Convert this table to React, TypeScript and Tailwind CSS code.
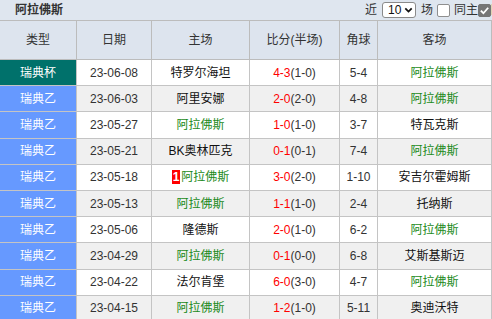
import React from "react";

type Row = {
  league: string;
  date: string;
  home: string;
  score: string;
  half: string;
  corner: string;
  away: string;
  cup?: boolean;
  tag?: string;
};

const TEAM = "阿拉佛斯";

const rows: Row[] = [
  { league: "瑞典杯", cup: true, date: "23-06-08", home: "特罗尔海坦", score: "4-3", half: "(1-0)", corner: "5-4", away: TEAM },
  { league: "瑞典乙", date: "23-06-03", home: "阿里安娜", score: "2-0", half: "(2-0)", corner: "4-8", away: TEAM },
  { league: "瑞典乙", date: "23-05-27", home: TEAM, score: "1-0", half: "(1-0)", corner: "3-7", away: "特瓦克斯" },
  { league: "瑞典乙", date: "23-05-21", home: "BK奥林匹克", score: "0-1", half: "(0-1)", corner: "7-4", away: TEAM },
  { league: "瑞典乙", date: "23-05-18", home: TEAM, tag: "1", score: "3-0", half: "(2-0)", corner: "1-10", away: "安吉尔霍姆斯" },
  { league: "瑞典乙", date: "23-05-13", home: TEAM, score: "1-1", half: "(1-0)", corner: "2-4", away: "托纳斯" },
  { league: "瑞典乙", date: "23-05-06", home: "隆德斯", score: "2-0", half: "(1-0)", corner: "6-2", away: TEAM },
  { league: "瑞典乙", date: "23-04-29", home: TEAM, score: "0-1", half: "(0-0)", corner: "6-8", away: "艾斯基斯迈" },
  { league: "瑞典乙", date: "23-04-22", home: "法尔肯堡", score: "6-0", half: "(3-0)", corner: "4-7", away: TEAM },
  { league: "瑞典乙", date: "23-04-15", home: TEAM, score: "1-2", half: "(1-0)", corner: "5-11", away: "奥迪沃特" },
];

const cols = ["w-[77px]", "w-[75px]", "w-[98px]", "w-[90px]", "w-[38px]", "flex-1"];

function TeamName({ name, tag }: { name: string; tag?: string }) {
  const isUs = name === TEAM;
  return (
    <span className={isUs ? "text-[#1a8a1a]" : "text-[#111]"}>
      {tag && (
        <span className="mr-px inline-block bg-[#ff0000] px-px text-[12px] leading-[14px] font-bold text-white">
          {tag}
        </span>
      )}
      {name}
    </span>
  );
}

function Check({ checked }: { checked?: boolean }) {
  return (
    <span
      className={
        "flex h-[13px] w-[13px] shrink-0 items-center justify-center rounded-[2px] border " +
        (checked ? "border-[#767676] bg-[#767676]" : "border-[#8f8f8f] bg-white")
      }
    >
      {checked && (
        <svg viewBox="0 0 12 12" className="h-[11px] w-[11px]">
          <path d="M2 6.2 L4.8 9 L10 3" fill="none" stroke="white" strokeWidth="2" />
        </svg>
      )}
    </span>
  );
}

export default function App() {
  return (
    <div
      className="w-[492px] overflow-hidden text-[12px] text-[#333]"
      style={{ fontFamily: '"Liberation Sans", "Noto Sans CJK SC", sans-serif' }}
    >
      <div className="flex h-[21px] items-center overflow-hidden border-b border-[#bcbcbc] bg-[#dfe6ef] pl-[15px]">
        <span className="w-[48px] shrink-0 font-bold text-[#333]">{TEAM}</span>
        <div className="ml-[302px] flex shrink-0 items-center whitespace-nowrap">
          <span className="mr-[5px]">近</span>
          <span className="flex h-[16px] w-[34px] items-center justify-between rounded-[3px] border border-[#8a8a8a] bg-white pr-[2px] pl-[5px] text-[#111]">
            10
            <svg viewBox="0 0 10 10" className="h-[8px] w-[9px]">
              <path d="M1 3 L5 7 L9 3" fill="none" stroke="#111" strokeWidth="2.2" />
            </svg>
          </span>
          <span className="mr-[4px] ml-[5px]">场</span>
          <Check />
          <span className="ml-[4px]">同主</span>
          <Check checked />
          <span>同客</span>
        </div>
      </div>
      <div className="flex h-[39px] border-b border-[#bcbcbc] bg-[#dde4ee]">
        {["类型", "日期", "主场", "比分(半场)", "角球", "客场"].map((h, i) => (
          <div
            key={h}
            className={cols[i] + " flex items-center justify-center border-r border-[#bcbcbc]"}
          >
            {h}
          </div>
        ))}
      </div>
      {rows.map((r, idx) => (
        <div
          key={r.date}
          className={
            "flex h-[26.2px] border-b border-[#c4c4c4] " + (idx % 2 === 1 ? "bg-[#f0f0f0]" : "bg-white")
          }
        >
          <div
            className={
              cols[0] +
              " flex items-center justify-center border-r border-[#c4c4c4] text-white " +
              (r.cup ? "bg-[#00716b]" : "bg-[#6699ff]")
            }
          >
            {r.league}
          </div>
          <div className={cols[1] + " flex items-center justify-center border-r border-[#c4c4c4] text-[#333]"}>
            {r.date}
          </div>
          <div className={cols[2] + " flex items-center justify-center border-r border-[#c4c4c4]"}>
            <TeamName name={r.home} tag={r.tag} />
          </div>
          <div className={cols[3] + " flex items-center justify-center border-r border-[#c4c4c4]"}>
            <span className="text-[#ff0000]">{r.score}</span>
            <span className="text-[#333]">{r.half}</span>
          </div>
          <div className={cols[4] + " flex items-center justify-center border-r border-[#c4c4c4] text-[#333]"}>
            {r.corner}
          </div>
          <div className={cols[5] + " flex items-center justify-center border-r border-[#c4c4c4]"}>
            <TeamName name={r.away} />
          </div>
        </div>
      ))}
    </div>
  );
}
